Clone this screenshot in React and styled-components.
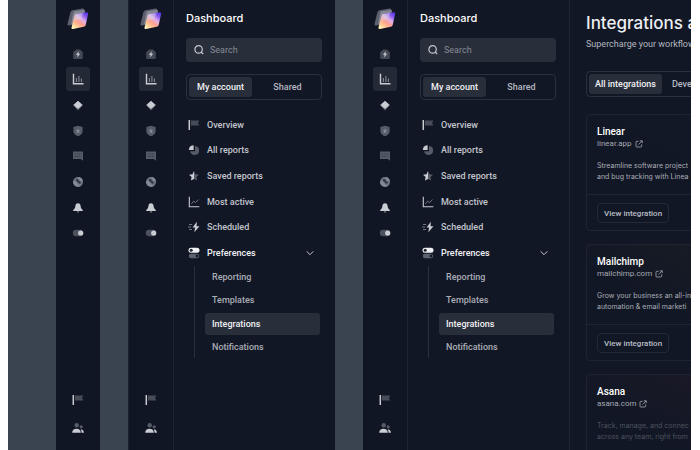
import React, { useId, useState } from 'react';
import styled, { createGlobalStyle, css } from 'styled-components';


const railItems = [
    { icon: 'home', label: 'Home' },
    { icon: 'bars', label: 'Analytics', active: true },
    { icon: 'layers', label: 'Layers' },
    { icon: 'shield', label: 'Security' },
    { icon: 'chat', label: 'Messages' },
    { icon: 'ball', label: 'Explore' },
    { icon: 'bell', label: 'Notifications' },
    { icon: 'toggle', label: 'Settings' },
]

const footItems = [
    { icon: 'flag', label: 'Reports' },
    { icon: 'people', label: 'Team' },
]

const navItems = [
    { icon: 'flag', label: 'Overview' },
    { icon: 'pie', label: 'All reports' },
    { icon: 'star', label: 'Saved reports' },
    { icon: 'trend', label: 'Most active' },
    { icon: 'bolt', label: 'Scheduled' },
    { icon: 'switches', label: 'Preferences', open: true },
]

const subItems = ['Reporting', 'Templates', 'Integrations', 'Notifications']

const cards = [
    { name: 'Linear', site: 'linear.app', lines: ['Streamline software project', 'and bug tracking with Linea'], tint: '#141926' },
    { name: 'Mailchimp', site: 'mailchimp.com', lines: ['Grow your business an all-in', 'automation & email marketi'], tint: '#1b1e24' },
    { name: 'Asana', site: 'asana.com', lines: ['Track, manage, and connec', 'across any team, right from'], tint: '#1f1a28', dim: true },
]

const light = '#c9ccd3'
const grey = '#555b67'

const drawings = {
    home: <>
        <path d="M4 1.400h4l.8 1.200 2 1.400v6a1 1 0 0 1-1 1H2.200a1 1 0 0 1-1-1V4l2-1.400z" fill="#434955" />
        <path d="M6.800 3.200 3.800 6.800h1.800l-.4 2.600 3-3.600H6.400z" fill={light} />
    </>,
    bars: <>
        <path d="M1.500 .8v10h10" fill="none" stroke={light} strokeWidth="1.400" />
        <path d="M4.400 9V5M6.900 9V3M9.400 9V5.500" stroke="#858b96" strokeWidth="1.100" />
    </>,
    layers: <>
        <path d="M2 7.200 6 11.500l4-4.300z" fill={grey} />
        <path d="M6 2.200 10.300 6 6 9.400 1.700 6z" fill={light} stroke={light} strokeWidth=".8" strokeLinejoin="round" />
    </>,
    shield: <>
        <path d="M6 .8 10.600 2v4.300c0 2.400-1.900 4-4.600 5-2.700-1-4.600-2.600-4.600-5V2z" fill={grey} />
        <path d="m6 3.400.7 1.500 1.500.3-1.100 1.100.3 1.900L6 7.400l-1.400.8.3-1.900-1.100-1.100 1.500-.3z" fill="#858b96" />
    </>,
    chat: <>
        <path d="M1 1.500h10v9.300L8.700 9H1z" fill={grey} />
        <path d="M2.500 4h7M2.500 6.500h7" stroke="#303642" strokeWidth=".8" strokeDasharray="1.500 .5" />
    </>,
    ball: <>
        <circle cx="6" cy="6" r="5" fill="#6e7480" />
        <path d="M1.200 5c2-.4 3.200.4 4 2s2 2.600 3.600 2.900A5 5 0 0 1 1.200 5z" fill="#858b96" />
        <path d="M4 3.500c1-.8 2.300-.4 2.600.6s1.600 1.800 2.600 2.400c-.6 1.500-2.200 1.500-3.200.2S3.500 5 4 3.500z" fill="#343a46" />
        <path d="M6 1a5 5 0 0 1 4.900 4.500C9 5.500 7.300 4 6 1z" fill="#858b96" />
    </>,
    bell: <>
        <path d="M5 9h2v1a1 1 0 0 1-2 0z" fill={grey} />
        <path d="M6 1.300c1.700 0 2.500 1.200 2.600 2.700.1 1.900.9 3 2.200 4v.9H1.200V8c1.300-1 2.100-2.100 2.200-4 .1-1.500.9-2.700 2.600-2.700z" fill={light} />
    </>,
    toggle: <>
        <rect x=".8" y="2.800" width="10.400" height="6.400" rx="3.200" fill="#4b515d" />
        <circle cx="8.700" cy="6" r="2.600" fill={light} />
    </>,
    flag: <>
        <path d="M3 1.500h8.400L10 4l1.400 2.500H3z" fill="#464c58" />
        <path d="M1.300 1v10" stroke={light} strokeWidth="1.500" />
    </>,
    people: <>
        <circle cx="4.700" cy="3.200" r="2.200" fill={grey} />
        <circle cx="9.200" cy="4.800" r="1.600" fill={grey} />
        <path d="M.2 10.800C.2 8.200 2 6.800 4.500 6.800s4.300 1.400 4.300 4z" fill={light} />
        <path d="M9.600 10.800c0-1.500-.5-2.500-1.100-3.200 2-.5 3.400.8 3.400 3.200z" fill={light} />
    </>,
    pie: <>
        <path d="M7 2a4.500 4.500 0 1 1-4.800 5.200H7z" fill={grey} />
        <path d="M5.600 1.200V6H.9A4.700 4.700 0 0 1 5.600 1.200z" fill={light} />
    </>,
    star: <>
        <path d="M6 1 7.500 4.300l3.500.4-2.600 2.400.7 3.500L6 8.900z" fill={grey} />
        <path d="M6 1v7.900l-3.100 1.700.7-3.500L1 4.700l3.500-.4z" fill={light} />
    </>,
    trend: <>
        <path d="M1.300.8v10h10" fill="none" stroke={light} strokeWidth="1.100" />
        <path d="m3.400 7.800 2.300-2.600 1.800 1.400 3-3" fill="none" stroke="#7b818c" strokeWidth=".9" />
    </>,
    bolt: <>
        <path d="M1 3.500h3.200M0 6h3.200M1 8.500h3" stroke="#7b818c" strokeWidth=".9" />
        <path d="M8.800.7 4.600 6.500h2.500l-.8 4.800 5.200-6.100H8.600z" fill={light} />
    </>,
    switches: <>
        <rect x=".5" y=".8" width="11" height="5" rx="2.500" fill="#f0f1f4" />
        <circle cx="3.200" cy="3.300" r="1.500" fill="#20252f" />
        <rect x=".8" y="6.800" width="10.400" height="4.400" rx="2.200" fill="#5d636e" />
        <circle cx="9" cy="9" r="1.400" fill="#161b27" />
    </>,
    search: <>
        <circle cx="5.600" cy="5.400" r="3.700" fill="none" stroke="#c6c9d0" strokeWidth="1.200" />
        <path d="m8.200 8 2 2.200" stroke="#c6c9d0" strokeWidth="1.200" />
    </>,
    chevron: <path d="m2 4 4 4 4-4" fill="none" stroke="#c6c9d0" strokeWidth="1.200" />,
    external: <>
        <path d="M5.500 2H2.700A1.200 1.200 0 0 0 1.500 3.200v6.100a1.200 1.200 0 0 0 1.200 1.200h6.100A1.200 1.200 0 0 0 10 9.300V6.500" fill="none" stroke="#a3a8b2" strokeWidth="1.200" />
        <path d="M7.300 1.200h3.600v3.600M10.700 1.400 5.300 6.800" fill="none" stroke="#a3a8b2" strokeWidth="1.200" />
    </>,
}

const Icon = ({ name, size = 12 }) => (
    <Drawing width={size} height={size} viewBox="0 0 12 12" aria-hidden="true">
        {drawings[name]}
    </Drawing>
)

const Logo = () => {
    const id = useId()
    return (
        <Drawing width="22" height="22" viewBox="0 0 22 22" role="img" aria-label="Logo">
            <defs>
                <linearGradient id={id} x1="1" y1="0" x2=".25" y2="1">
                    <stop offset="0" stopColor="#4326d8" />
                    <stop offset=".25" stopColor="#8a5cf0" />
                    <stop offset=".45" stopColor="#e0b0e8" />
                    <stop offset=".65" stopColor="#ffa08e" />
                    <stop offset=".85" stopColor="#ffc890" />
                    <stop offset="1" stopColor="#fff0b8" />
                </linearGradient>
            </defs>
            <path d="M5.500 2.300 15.600.6q1.800-.2 1.500 1.500L14.600 14q-.4 1.600-2 1.900L1.900 17.600Q.2 17.800.5 16L3.400 4.200q.4-1.600 2.100-1.900z" fill="#5b606c" />
            <path d="M7.300 3.200 17 2q1.500-.2 1.100 1.400L16 13q-.4 1.600-2 1.900l-8.500 1.200q-1.500.2-1.200-1.300l2-9.700q.3-1.600 1-1.900z" fill="#9296a2" opacity=".75" />
            <path d="M9.600 5.900 19.800 4.300q1.800-.2 1.400 1.500L18.700 17q-.4 1.500-2 1.800L6 20.900q-1.900.2-1.500-1.500L7.600 7.700q.4-1.500 2-1.800z" fill={`url(#${id})`} />
            <path d="m9.600 5.900 6.700-1L14 11l-7.600 2L7.600 7.700q.4-1.500 2-1.800z" fill="#d7d9e4" opacity=".45" />
        </Drawing>
    )
}

const SideRail = () => (
    <Rail>
        <LogoSlot><Logo /></LogoSlot>
        <RailList>
            {railItems.map(item => (
                <RailButton key={item.icon} aria-label={item.label} $active={item.active}>
                    <Icon name={item.icon} />
                </RailButton>
            ))}
        </RailList>
        <RailFoot>
            {footItems.map(item => (
                <RailButton key={item.icon} aria-label={item.label}>
                    <Icon name={item.icon} />
                </RailButton>
            ))}
        </RailFoot>
    </Rail>
)

const DashboardPanel = () => {
    const [tab, setTab] = useState('My account')
    const [current, setCurrent] = useState('Integrations')

    return (
        <Panel>
            <PanelTitle>Dashboard</PanelTitle>
            <SearchBox>
                <Icon name="search" />
                <SearchInput type="search" placeholder="Search" aria-label="Search" />
            </SearchBox>
            <Tabs $even>
                {['My account', 'Shared'].map(name => (
                    <Tab key={name} $active={tab === name} onClick={() => setTab(name)}>{name}</Tab>
                ))}
            </Tabs>
            <Nav>
                {navItems.map(item => (
                    <NavLink key={item.label} href="#" $open={item.open}>
                        <Icon name={item.icon} />
                        <NavText>{item.label}</NavText>
                        {item.open && <Icon name="chevron" size={10} />}
                    </NavLink>
                ))}
            </Nav>
            <SubNav>
                {subItems.map(name => (
                    <SubLink key={name} href="#" $active={current === name} onClick={() => setCurrent(name)}>{name}</SubLink>
                ))}
            </SubNav>
        </Panel>
    )
}

const IntegrationCard = ({ name, site, lines, tint, dim }) => (
    <Card $tint={tint}>
        <CardBody>
            <CardTitle>{name}</CardTitle>
            <CardSite href="#">{site}<Icon name="external" size={8} /></CardSite>
            <CardText $dim={dim}>{lines[0]}<br />{lines[1]}</CardText>
        </CardBody>
        <CardFoot>
            <ViewButton>View integration</ViewButton>
        </CardFoot>
    </Card>
)

const App = () => (
    <>
        <GlobalStyle />
        <Canvas>
            <Frame>
                <SideRail />
            </Frame>
            <Frame $edge>
                <SideRail />
                <DashboardPanel />
            </Frame>
            <Frame $grow>
                <SideRail />
                <DashboardPanel />
                <Main>
                    <Content>
                        <PageTitle>Integrations a</PageTitle>
                        <PageText>Supercharge your workflow</PageText>
                        <Tabs>
                            <Tab $active>All integrations</Tab>
                            <Tab>Deve</Tab>
                        </Tabs>
                        <CardList>
                            {cards.map(card => <IntegrationCard key={card.name} {...card} />)}
                        </CardList>
                    </Content>
                </Main>
            </Frame>
        </Canvas>
    </>
)


export default App;

const GlobalStyle = createGlobalStyle`
    *{
        box-sizing:border-box;
    }
    body{
        margin:0;
        background:#fff;
        font-family:Roboto, "Liberation Sans", sans-serif;
        font-size:9px;
        color:#c3c6cd;
    }
    button, input{
        font:inherit;
        color:inherit;
        border:0;
        padding:0;
        background:none;
    }
    a{
        color:inherit;
        text-decoration:none;
    }
`

const Canvas = styled.div`
    display:flex;
    gap:28px;
    height:100vh;
    margin:0 9px 0 8px;
    padding-left:48px;
    overflow:hidden;
    background:#3a4350;
`

const Frame = styled.div`
    display:flex;
    flex:${props => props.$grow ? '1 1 0' : 'none'};
    min-width:0;
    background:#121725;
    ${props => props.$edge && css`
        border-left:1px solid #1b212e;
    `}
`

const Drawing = styled.svg`
    display:block;
    flex:none;
`

const Rail = styled.nav`
    display:flex;
    flex-direction:column;
    align-items:center;
    flex:none;
    width:44px;
    padding:8px 0;
    background:#101623;
`

const LogoSlot = styled.div`
    height:33px;
`

const RailList = styled.div`
    display:grid;
    grid-template-rows:repeat(8, 1fr);
    align-items:center;
    height:205px;
`

const RailFoot = styled.div`
    display:grid;
    grid-template-rows:repeat(2, 28px);
    align-items:center;
    margin-top:auto;
`

const RailButton = styled.button`
    display:flex;
    align-items:center;
    justify-content:center;
    width:24px;
    height:24px;
    border-radius:3px;
    background:${props => props.$active ? '#242a35' : 'none'};
`

const Panel = styled.aside`
    flex:none;
    width:162px;
    padding:10px 13px 0 12px;
    border-left:1px solid #1e2431;
`

const PanelTitle = styled.h2`
    margin:0 0 12px;
    font-size:11px;
    line-height:16px;
    font-family:Inter, sans-serif;
    font-weight:500;
    color:#fff;
`

const SearchBox = styled.label`
    display:flex;
    align-items:center;
    gap:5px;
    height:24px;
    padding:0 7px;
    border-radius:4px;
    background:#282e3a;
`

const SearchInput = styled.input`
    flex:1;
    min-width:0;
    outline:none;
    &::placeholder{
        color:#868b95;
        opacity:1;
    }
`

const Tabs = styled.div`
    display:flex;
    gap:4px;
    height:26px;
    margin-top:12px;
    padding:2px;
    border:1px solid #2a303c;
    border-radius:4px;
    ${props => props.$even && css`
        > button{
            flex:1;
            padding:0;
        }
    `}
`

const Tab = styled.button`
    padding:0 6px;
    border-radius:3px;
    font-weight:500;
    white-space:nowrap;
    color:${props => props.$active ? '#f0f1f4' : '#b4b8c0'};
    background:${props => props.$active ? '#282e3a' : 'none'};
`

const Nav = styled.nav`
    display:grid;
    grid-template-rows:repeat(6, 1fr);
    height:154px;
    margin-top:12px;
`

const NavLink = styled.a`
    display:flex;
    align-items:center;
    gap:7px;
    padding:0 7px 0 2px;
    font-weight:500;
    color:${props => props.$open ? '#f0f1f4' : '#c3c6cd'};
`

const NavText = styled.span`
    flex:1;
`

const SubNav = styled.div`
    display:grid;
    grid-template-rows:repeat(4, 1fr);
    gap:2px;
    height:92px;
    margin:0 2px 0 8px;
    padding-left:10px;
    border-left:1px solid #2a303c;
`

const SubLink = styled.a`
    display:flex;
    align-items:center;
    padding-left:7px;
    border-radius:3px;
    font-weight:500;
    color:${props => props.$active ? '#f0f1f4' : '#a9adb6'};
    background:${props => props.$active ? '#282e3a' : 'none'};
`

const Main = styled.main`
    flex:1;
    min-width:0;
    overflow:hidden;
    border-left:1px solid #1e2431;
`

const Content = styled.div`
    min-width:240px;
    padding:12px 16px 0;
`

const PageTitle = styled.h1`
    margin:0;
    font-size:17px;
    line-height:22px;
    font-family:Inter, sans-serif;
    font-weight:500;
    color:#eceef1;
    white-space:nowrap;
`

const PageText = styled.p`
    margin:4px 0 21px;
    font-size:9px;
    line-height:12px;
    white-space:nowrap;
    color:#b4b8c0;
`

const CardList = styled.div`
    display:grid;
    gap:13px;
    margin-top:17px;
`

const Card = styled.article`
    border:1px solid #1e2431;
    border-radius:4px;
    background:linear-gradient(to bottom left, ${props => props.$tint}, #121725 60%);
`

const CardBody = styled.div`
    height:79px;
    padding:11px 10px 0;
`

const CardTitle = styled.h3`
    margin:0;
    font-size:10px;
    line-height:12px;
    font-weight:500;
    color:#fff;
`

const CardSite = styled.a`
    display:flex;
    align-items:center;
    gap:3px;
    font-size:8px;
    line-height:12px;
    color:#a3a8b2;
`

const CardText = styled.p`
    margin:10px 0 0;
    font-family:Inter, sans-serif;
    font-size:7px;
    line-height:11px;
    white-space:nowrap;
    color:${props => props.$dim ? '#4d535f' : '#a9adb6'};
`

const CardFoot = styled.div`
    padding:8px 10px 7px;
    border-top:1px solid #1e2431;
`

const ViewButton = styled.button`
    display:block;
    height:20px;
    padding:0 6px;
    border:1px solid #232936;
    border-radius:4px;
    font-size:8px;
    font-weight:500;
    color:#b9bdc5;
`
